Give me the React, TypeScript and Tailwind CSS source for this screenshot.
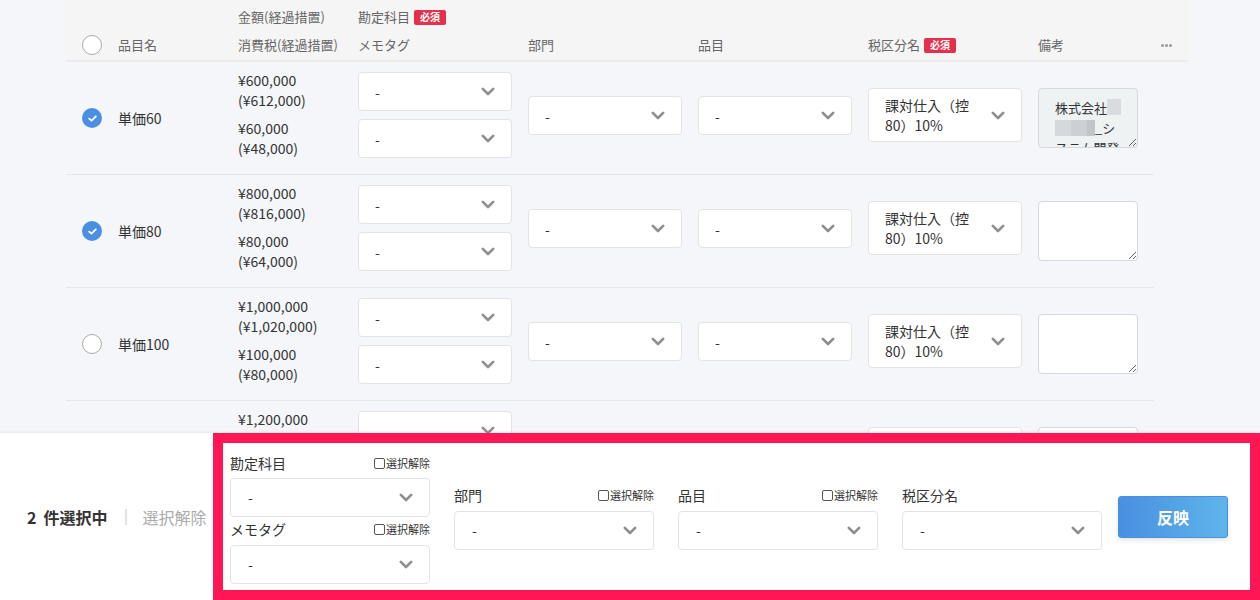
import React from "react";

type Row = {
  name: string;
  checked: boolean;
  amounts: string[];
  memo?: boolean;
};

const rows: Row[] = [
  { name: "単価60", checked: true, amounts: ["¥600,000", "(¥612,000)", "¥60,000", "(¥48,000)"], memo: true },
  { name: "単価80", checked: true, amounts: ["¥800,000", "(¥816,000)", "¥80,000", "(¥64,000)"] },
  { name: "単価100", checked: false, amounts: ["¥1,000,000", "(¥1,020,000)", "¥100,000", "(¥80,000)"] },
  { name: "単価120", checked: false, amounts: ["¥1,200,000", "(¥1,224,000)", "¥120,000", "(¥96,000)"] },
];

function Chevron() {
  return (
    <svg width="14" height="9" viewBox="0 0 14 9" fill="none">
      <path d="M1.8 1.8 L7 7 L12.2 1.8" stroke="#8f8f8f" strokeWidth="2.6" strokeLinecap="round" strokeLinejoin="round" />
    </svg>
  );
}

function Select({ className = "", value = "-" }: { className?: string; value?: string }) {
  return (
    <div className={`flex items-center justify-between rounded-[4px] border border-[#e3e3e3] bg-white pr-4 text-[14px] text-[#333] ${className}`}>
      <span>{value}</span>
      <Chevron />
    </div>
  );
}

function Badge() {
  return (
    <span className="ml-1 inline-flex h-[15px] items-center rounded-[2px] bg-[#e4304b] px-[6px] text-[10px] font-bold leading-none text-white">
      必須
    </span>
  );
}

function Circle({ checked }: { checked: boolean }) {
  if (checked) {
    return (
      <span className="flex h-[20px] w-[20px] items-center justify-center rounded-full bg-[#4a8fe2]">
        <svg width="9" height="7" viewBox="0 0 9 7" fill="none">
          <path d="M1.2 3.6 L3.5 5.7 L7.8 1.3" stroke="white" strokeWidth="1.8" strokeLinecap="round" strokeLinejoin="round" />
        </svg>
      </span>
    );
  }
  return <span className="block h-[20px] w-[20px] rounded-full border border-[#aaa] bg-white" />;
}

function SmallCheck() {
  return (
    <label className="flex items-center gap-[1px] text-[11px] text-[#333]">
      <span className="block h-[11px] w-[11px] rounded-[2px] border border-[#555] bg-white" />
      選択解除
    </label>
  );
}

function MemoBox() {
  return (
    <div className="h-[60px] w-[100px] resize overflow-hidden rounded-[4px] border border-[#d3d9dc] bg-[#eef2f3] px-4 pt-[9px] text-[13px] leading-[20px] text-[#333]">
      <div className="flex whitespace-nowrap">
        株式会社<span className="mt-[1px] inline-block h-[16px] w-[15px] bg-[#d9dcde]" />
      </div>
      <div className="flex whitespace-nowrap">
        <span className="mt-[2px] inline-block h-[16px] w-[16px] bg-[#d6d9db]" />
        <span className="mt-[2px] inline-block h-[16px] w-[16px] bg-[#cdd0d2]" />
        <span className="mt-[2px] inline-block h-[16px] w-[8px] bg-[#c2c5c7]" />
        _シ
      </div>
      <div className="whitespace-nowrap">ステム開発</div>
    </div>
  );
}

export default function App() {
  return (
    <div className="flex h-[600px] w-full flex-col overflow-hidden bg-[#f4f6f9] font-['Noto_Sans_CJK_JP',sans-serif] text-[#333]">
      <div className="min-h-0 flex-1 overflow-hidden">
        {/* header */}
        <div className="ml-[66px] h-[62px] w-[1122px] border-b-2 border-[#ebebeb] bg-[#f5f5f5]">
          <div className="grid h-full grid-cols-[52px_120px_120px_170px_170px_170px_170px_116px_34px] items-end pb-[5px] text-[13px] leading-[20px] text-[#666]">
            <div className="pl-4">
              <Circle checked={false} />
            </div>
            <div>品目名</div>
            <div className="flex flex-col gap-2">
              <div>金額(経過措置)</div>
              <div>消費税(経過措置)</div>
            </div>
            <div className="flex flex-col gap-2">
              <div className="flex items-center">
                勘定科目
                <Badge />
              </div>
              <div>メモタグ</div>
            </div>
            <div>部門</div>
            <div>品目</div>
            <div className="flex items-center">
              税区分名
              <Badge />
            </div>
            <div>備考</div>
            <div className="flex h-[20px] items-center gap-[1px] pl-[7px]">
              <span className="h-[3px] w-[3px] rounded-full bg-[#9a9a9a]" />
              <span className="h-[3px] w-[3px] rounded-full bg-[#9a9a9a]" />
              <span className="h-[3px] w-[3px] rounded-full bg-[#9a9a9a]" />
            </div>
          </div>
        </div>

        {/* rows */}
        <div className="ml-[66px] w-[1088px]">
          {rows.map((r) => (
            <div
              key={r.name}
              className="grid h-[113px] grid-cols-[52px_120px_120px_170px_170px_170px_170px_116px] items-center border-b border-[#e4e8eb] text-[14px] leading-[20px]"
            >
              <div className="pl-4">
                <Circle checked={r.checked} />
              </div>
              <div>{r.name}</div>
              <div className="mb-[8px] flex flex-col gap-2">
                <div>
                  <div>{r.amounts[0]}</div>
                  <div>{r.amounts[1]}</div>
                </div>
                <div>
                  <div>{r.amounts[2]}</div>
                  <div>{r.amounts[3]}</div>
                </div>
              </div>
              <div className="mb-[6px] flex flex-col gap-2">
                <Select className="h-[39px] w-[154px] pl-4" />
                <Select className="h-[39px] w-[154px] pl-4" />
              </div>
              <div className="mb-[5px]">
                <Select className="h-[39px] w-[154px] pl-4" />
              </div>
              <div className="mb-[5px]">
                <Select className="h-[39px] w-[154px] pl-4" />
              </div>
              <div className="mb-[6px]">
                <div className="flex h-[54px] w-[154px] items-center justify-between rounded-[4px] border border-[#e3e3e3] bg-white pl-4 pr-4 text-[14px] text-[#333]">
                  <span className="w-[98px] leading-[20px]">課対仕入（控80）10%</span>
                  <Chevron />
                </div>
              </div>
              <div>
                {r.memo ? (
                  <MemoBox />
                ) : (
                  <textarea
                    readOnly
                    className="block h-[60px] w-[100px] resize rounded-[4px] border border-[#d3d9dc] bg-white"
                  />
                )}
              </div>
            </div>
          ))}
        </div>
      </div>

      {/* bulk edit bar */}
      <div className="relative z-10 flex h-[167px] shrink-0 bg-white shadow-[0_-1px_3px_rgba(0,0,0,0.08)]">
        <div className="flex w-[213px] items-center pl-[27px]">
          <span className="text-[16px] font-bold text-[#333]">2</span>
          <span className="ml-[7px] text-[16px] font-bold text-[#333]">件選択中</span>
          <span className="ml-[18px] h-[16px] w-[2px] bg-[#e2e2e2]" />
          <span className="ml-[15px] text-[16px] text-[#aaa]">選択解除</span>
        </div>
        <div className="flex flex-1 items-center border-[10px] border-[#ff1755] pl-[7px]">
          <div className="flex w-[200px] flex-col self-start pt-[8px]">
            <div className="flex h-[24px] items-center justify-between text-[14px]">
              <span>勘定科目</span>
              <SmallCheck />
            </div>
            <Select className="mt-[3px] h-[39px] w-[200px] pl-[17px]" />
            <div className="flex h-[24px] items-center justify-between text-[14px]">
              <span>メモタグ</span>
              <SmallCheck />
            </div>
            <Select className="mt-[4px] h-[39px] w-[200px] pl-[17px]" />
          </div>
          {["部門", "品目", "税区分名"].map((l) => (
            <div key={l} className="ml-[24px] flex w-[200px] flex-col">
              <div className="flex h-[24px] items-center justify-between text-[14px]">
                <span>{l}</span>
                {l !== "税区分名" && <SmallCheck />}
              </div>
              <Select className="mt-[4px] h-[39px] w-[200px] pl-[17px]" />
            </div>
          ))}
          <button className="ml-[16px] h-[42px] w-[110px] rounded-[3px] border border-[#4a8fe0] bg-gradient-to-r from-[#4a8fe0] to-[#5fb5eb] text-[16px] font-bold text-white shadow-[0_2px_4px_rgba(0,0,0,0.12)]">
            反映
          </button>
        </div>
      </div>
    </div>
  );
}
